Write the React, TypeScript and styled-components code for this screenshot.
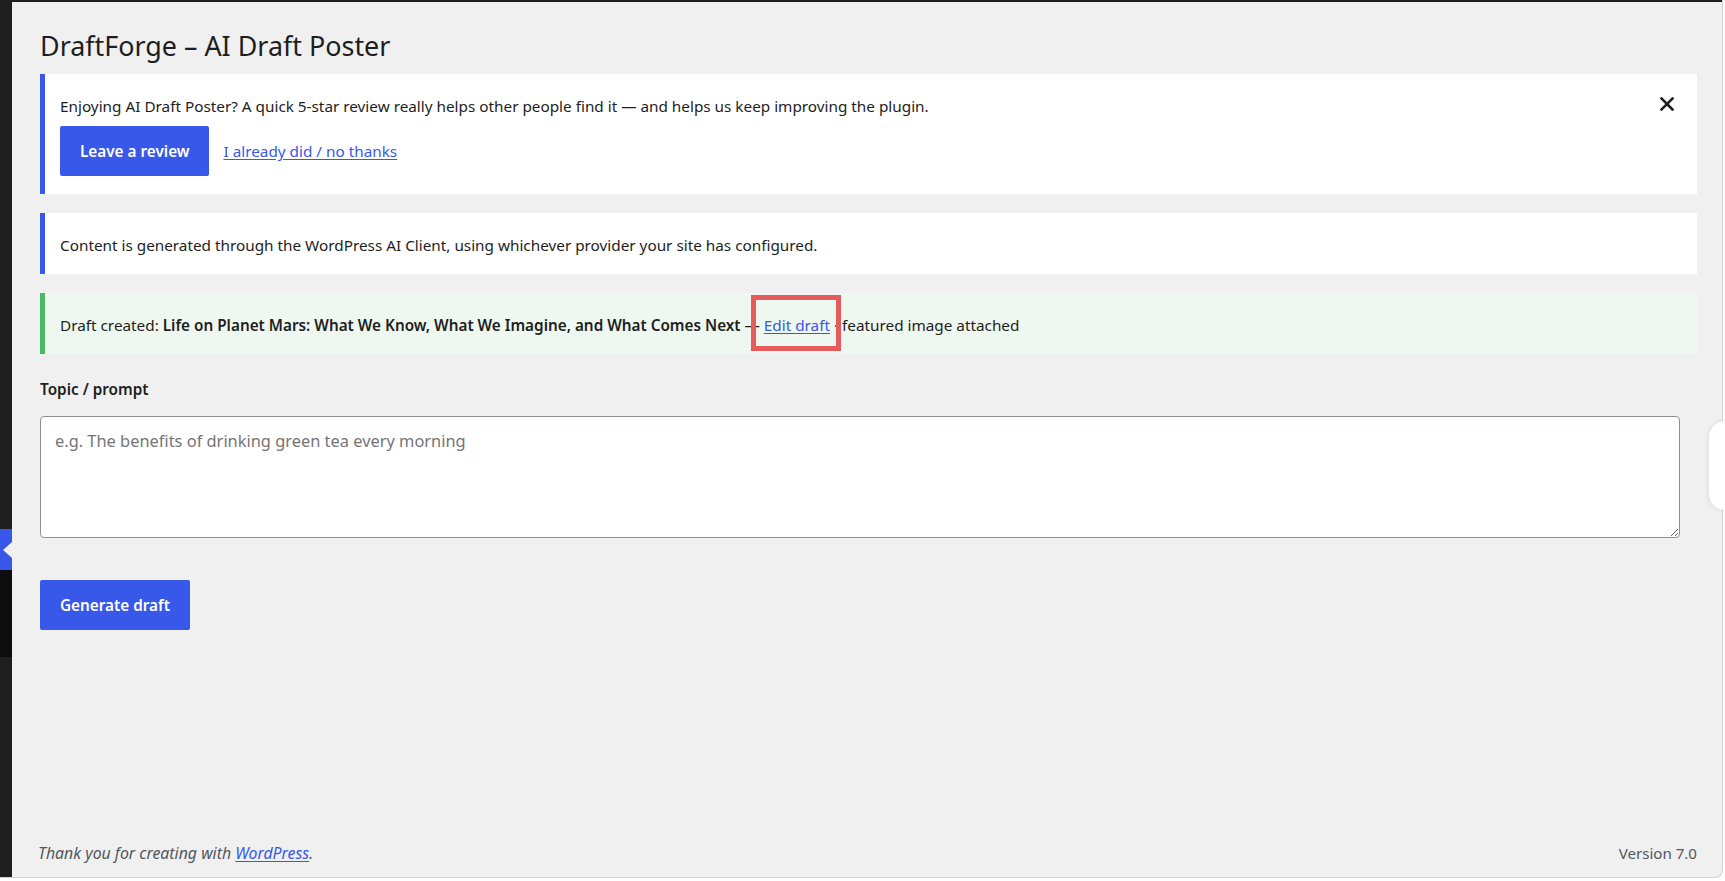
import React from "react";
import styled, { createGlobalStyle } from "styled-components";

const GlobalStyle = createGlobalStyle`
  html, body { margin: 0; padding: 0; background: #ffffff; }
  body {
    font-family: "Noto Sans", "Inter", sans-serif;
    color: #1e1e1e;
    font-size: 15.3px;
    line-height: 22px;
  }
  *, *::before, *::after { box-sizing: border-box; }
`;

const Page = styled.div`
  position: relative;
  width: 1725px;
  height: 881px;
  overflow: hidden;
`;

const Frame = styled.div`
  width: 1723px;
  height: 878px;
  display: flex;
  flex-direction: column;
  background: #f0f0f0;
  border-right: 1px solid #d2d2d2;
  border-bottom: 1px solid #d2d2d2;
  border-bottom-right-radius: 8px;
  overflow: hidden;
`;

const AdminBarEdge = styled.div`
  height: 2px;
  flex: none;
  background: #1e1e1e;
`;

const Body = styled.div`
  flex: 1;
  display: flex;
  min-height: 0;
`;

const Sidebar = styled.nav`
  width: 12px;
  flex: none;
  display: flex;
  flex-direction: column;
  background: #1e1e1e;
`;

const MenuBlock = styled.div<{ $h: number }>`
  height: ${(p) => p.$h}px;
  flex: none;
`;

const CurrentItem = styled.div`
  height: 41px;
  flex: none;
  background: #3858e9;
  display: flex;
  align-items: center;
  justify-content: flex-end;
`;

const Arrow = styled.span`
  width: 0;
  height: 0;
  border-right: 9px solid #f0f0f0;
  border-top: 8.5px solid transparent;
  border-bottom: 8.5px solid transparent;
`;

const Submenu = styled.div`
  height: 87px;
  flex: none;
  background: #0e0e0e;
`;

const Main = styled.main`
  flex: 1;
  min-width: 0;
  display: flex;
  flex-direction: column;
  padding: 26px 25px 0 28px;
`;

const Title = styled.h1`
  margin: 0 0 11px;
  font-size: 26.9px;
  line-height: 35px;
  font-weight: 400;
  color: #1e1e1e;
`;

const Notice = styled.div<{ $variant: "info" | "success" }>`
  position: relative;
  background: ${(p) => (p.$variant === "success" ? "#eef7f0" : "#ffffff")};
  border-left: 5px solid ${(p) => (p.$variant === "success" ? "#4ab866" : "#3858e9")};
  padding: 21px 15px 18px;
  margin-bottom: 19px;
`;

const NoticeText = styled.p`
  margin: 0;
`;

const Actions = styled.div`
  display: flex;
  align-items: center;
  gap: 14px;
  margin-top: 9px;
`;

const PrimaryButton = styled.button`
  height: 50px;
  padding: 0 20px;
  border: none;
  border-radius: 2px;
  background: #3858e9;
  color: #ffffff;
  font-family: inherit;
  font-size: 15.3px;
  font-weight: 600;
  line-height: 22px;
  cursor: pointer;
  align-self: flex-start;
`;

const GenerateButton = styled(PrimaryButton)`
  margin-top: 42px;
`;

const TextLink = styled.a`
  color: #3858e9;
  text-decoration: underline;
  text-underline-offset: 2px;
`;

const DismissButton = styled.button`
  position: absolute;
  top: 15px;
  right: 15px;
  width: 30px;
  height: 30px;
  padding: 0;
  border: none;
  background: transparent;
  display: flex;
  align-items: center;
  justify-content: center;
  color: #1e1e1e;
  cursor: pointer;
`;

const Strong = styled.strong`
  font-weight: 600;
`;

const Annotated = styled.span`
  position: relative;
  display: inline-block;
`;

const Callout = styled.span`
  position: absolute;
  left: -13px;
  right: -11px;
  top: -19px;
  bottom: -15px;
  border: 5px solid #e65b5b;
  pointer-events: none;
`;

const FieldLabel = styled.label`
  display: block;
  margin: 5px 0 16px;
  font-weight: 600;
  color: #1e1e1e;
`;

const PromptArea = styled.textarea`
  display: block;
  width: calc(100% - 17px);
  height: 122px;
  padding: 12px 14px 11px;
  border: 1px solid #8c8f94;
  border-radius: 4px;
  background: #ffffff;
  color: #1e1e1e;
  font-family: inherit;
  font-size: 16.4px;
  line-height: 24.6px;
  &::placeholder {
    color: #757575;
  }
`;

const Footer = styled.footer`
  margin-top: auto;
  margin-left: -2px;
  padding-bottom: 13px;
  display: flex;
  justify-content: space-between;
  color: #50575e;
`;

const Thanks = styled.p`
  margin: 0;
  font-style: italic;
  font-size: 15.85px;
`;

const Version = styled.p`
  margin: 0;
  font-size: 15.1px;
`;

const SideTab = styled.div`
  position: absolute;
  right: 0;
  top: 421px;
  width: 16px;
  height: 89px;
  background: #ffffff;
  border-radius: 16px 0 0 16px;
  box-shadow: 0 0 5px rgba(0, 0, 0, 0.12);
`;

const CloseIcon = () => (
  <svg width="14" height="14" viewBox="0 0 14 14" aria-hidden="true">
    <path d="M1.5 1.5 L12.5 12.5 M12.5 1.5 L1.5 12.5" stroke="currentColor" strokeWidth="2.5" strokeLinecap="square" fill="none" />
  </svg>
);

export default function App() {
  return (
    <>
      <GlobalStyle />
      <Page>
        <Frame>
          <AdminBarEdge />
          <Body>
            <Sidebar>
              <MenuBlock $h={527} />
              <CurrentItem>
                <Arrow />
              </CurrentItem>
              <Submenu />
            </Sidebar>
            <Main>
              <Title>DraftForge – AI Draft Poster</Title>

              <Notice $variant="info">
                <NoticeText>
                  Enjoying AI Draft Poster? A quick 5-star review really helps other people find it — and helps us keep improving the plugin.
                </NoticeText>
                <Actions>
                  <PrimaryButton type="button">Leave a review</PrimaryButton>
                  <TextLink href="#">I already did / no thanks</TextLink>
                </Actions>
                <DismissButton type="button" aria-label="Dismiss">
                  <CloseIcon />
                </DismissButton>
              </Notice>

              <Notice $variant="info">
                <NoticeText>
                  Content is generated through the WordPress AI Client, using whichever provider your site has configured.
                </NoticeText>
              </Notice>

              <Notice $variant="success">
                <NoticeText>
                  Draft created: <Strong>Life on Planet Mars: What We Know, What We Imagine, and What Comes Next</Strong> —{" "}
                  <Annotated>
                    <TextLink href="#">Edit draft</TextLink>
                    <Callout />
                  </Annotated>{" "}
                  · featured image attached
                </NoticeText>
              </Notice>

              <FieldLabel htmlFor="topic">Topic / prompt</FieldLabel>
              <PromptArea id="topic" placeholder="e.g. The benefits of drinking green tea every morning" />

              <GenerateButton type="button">Generate draft</GenerateButton>

              <Footer>
                <Thanks>
                  Thank you for creating with <TextLink href="#">WordPress</TextLink>.
                </Thanks>
                <Version>Version 7.0</Version>
              </Footer>
            </Main>
          </Body>
        </Frame>
        <SideTab />
      </Page>
    </>
  );
}
